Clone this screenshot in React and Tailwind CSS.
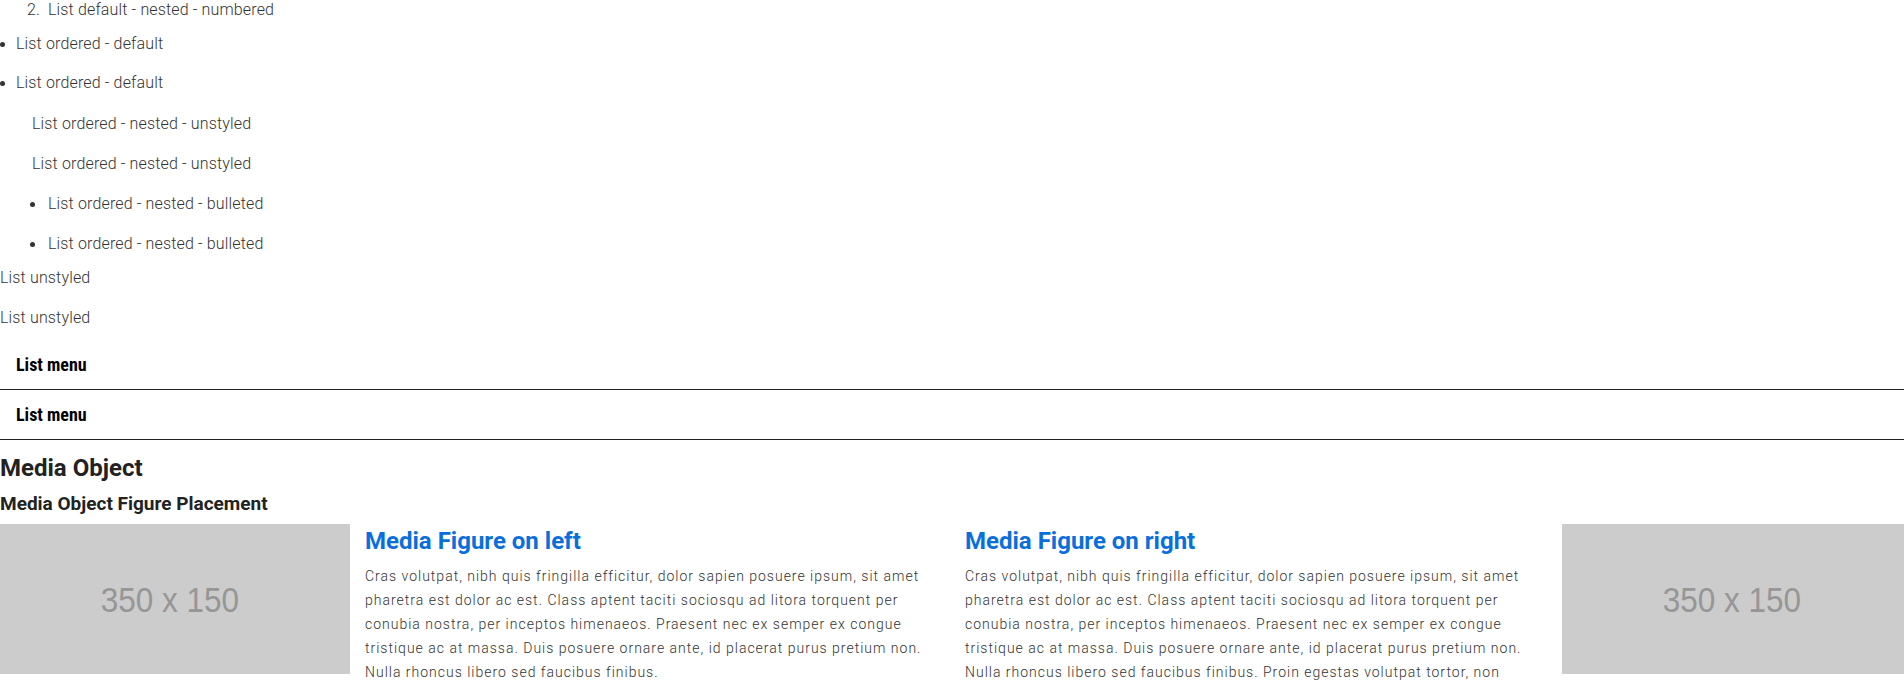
import React from 'react';

// ── Small pieces ──────────────────────────────────────────────────────────────
const Dot = ({ className = '' }) => (
  <span className={`inline-block h-[5px] w-[5px] shrink-0 rounded-full bg-[#333] ${className}`} />
);

const Placeholder = () => (
  <div className="flex h-[150px] w-[350px] shrink-0 items-center justify-center bg-[#cccccc] pr-[10px]">
    <span className="scale-x-90 font-['Liberation_Sans',Arial,sans-serif] text-[35px] leading-none text-[#969696]">
      350 x 150
    </span>
  </div>
);

const LOREM =
  'Cras volutpat, nibh quis fringilla efficitur, dolor sapien posuere ipsum, sit amet pharetra est dolor ac est. Class aptent taciti sociosqu ad litora torquent per conubia nostra, per inceptos himenaeos. Praesent nec ex semper ex congue tristique ac at massa. Duis posuere ornare ante, id placerat purus pretium non. Nulla rhoncus libero sed faucibus finibus.';

const MediaBody = ({ title, extra = '', className = '' }) => (
  <div className={`min-w-0 flex-1 ${className}`}>
    <h3 className="mt-[3px] mb-[9px] text-[24px] font-bold leading-[28px] text-[#0a6fdc]">{title}</h3>
    <p className="text-[14px] font-light leading-6 tracking-[1px] text-[#333]">
      {LOREM}
      {extra}
    </p>
  </div>
);

// ── Page ──────────────────────────────────────────────────────────────────────
export default function App() {
  return (
    <div className="w-full overflow-hidden bg-white font-['Roboto',sans-serif] text-[#333]">
      {/* lists */}
      <div className="-mt-[2px] flex flex-col text-[16px] font-light leading-6 tracking-[0.15px]">
        <div className="flex h-6 items-center pl-[27px]">
          <span className="w-[21px]">2.</span>
          <span>List default - nested - numbered</span>
        </div>

        <div className="mt-[10px] flex h-6 items-center">
          <Dot className="mr-[11px]" />
          <span>List ordered - default</span>
        </div>
        <div className="mt-[15px] flex h-6 items-center">
          <Dot className="mr-[11px]" />
          <span>List ordered - default</span>
        </div>

        <div className="mt-[17px] h-6 pl-[32px]">List ordered - nested - unstyled</div>
        <div className="mt-4 h-6 pl-[32px]">List ordered - nested - unstyled</div>

        <div className="mt-4 flex h-6 items-center">
          <Dot className="ml-[30px] mr-[13px]" />
          <span>List ordered - nested - bulleted</span>
        </div>
        <div className="mt-4 flex h-6 items-center">
          <Dot className="ml-[30px] mr-[13px]" />
          <span>List ordered - nested - bulleted</span>
        </div>

        <div className="mt-[10px] h-6">List unstyled</div>
        <div className="mt-4 h-6">List unstyled</div>
      </div>

      {/* list menu */}
      <ul className="mt-[10px]">
        {['List menu', 'List menu'].map((t, i) => (
          <li
            key={i}
            className="flex h-[50px] items-center border-b border-[#222] pl-[16px] font-['Liberation_Sans_Narrow','Roboto_Condensed',sans-serif] text-[18px] font-bold text-black"
          >
            {t}
          </li>
        ))}
      </ul>

      {/* media object */}
      <h2 className="mt-[14px] text-[24px] font-bold leading-[28px] text-[#222]">Media Object</h2>
      <h4 className="mt-[11px] text-[19px] font-bold leading-[22px] text-[#222]">Media Object Figure Placement</h4>

      <div className="mt-[9px] flex w-[1912px] gap-[18px]">
        <div className="flex flex-1">
          <Placeholder />
          <MediaBody title="Media Figure on left" className="ml-[15px]" />
        </div>
        <div className="flex flex-1">
          <MediaBody
            title="Media Figure on right"
            className="mr-[13px]"
            extra=" Proin egestas volutpat tortor, non consequat nibh tincidunt vel. Etiam at sem vitae lorem semper feugiat."
          />
          <Placeholder />
        </div>
      </div>
    </div>
  );
}
